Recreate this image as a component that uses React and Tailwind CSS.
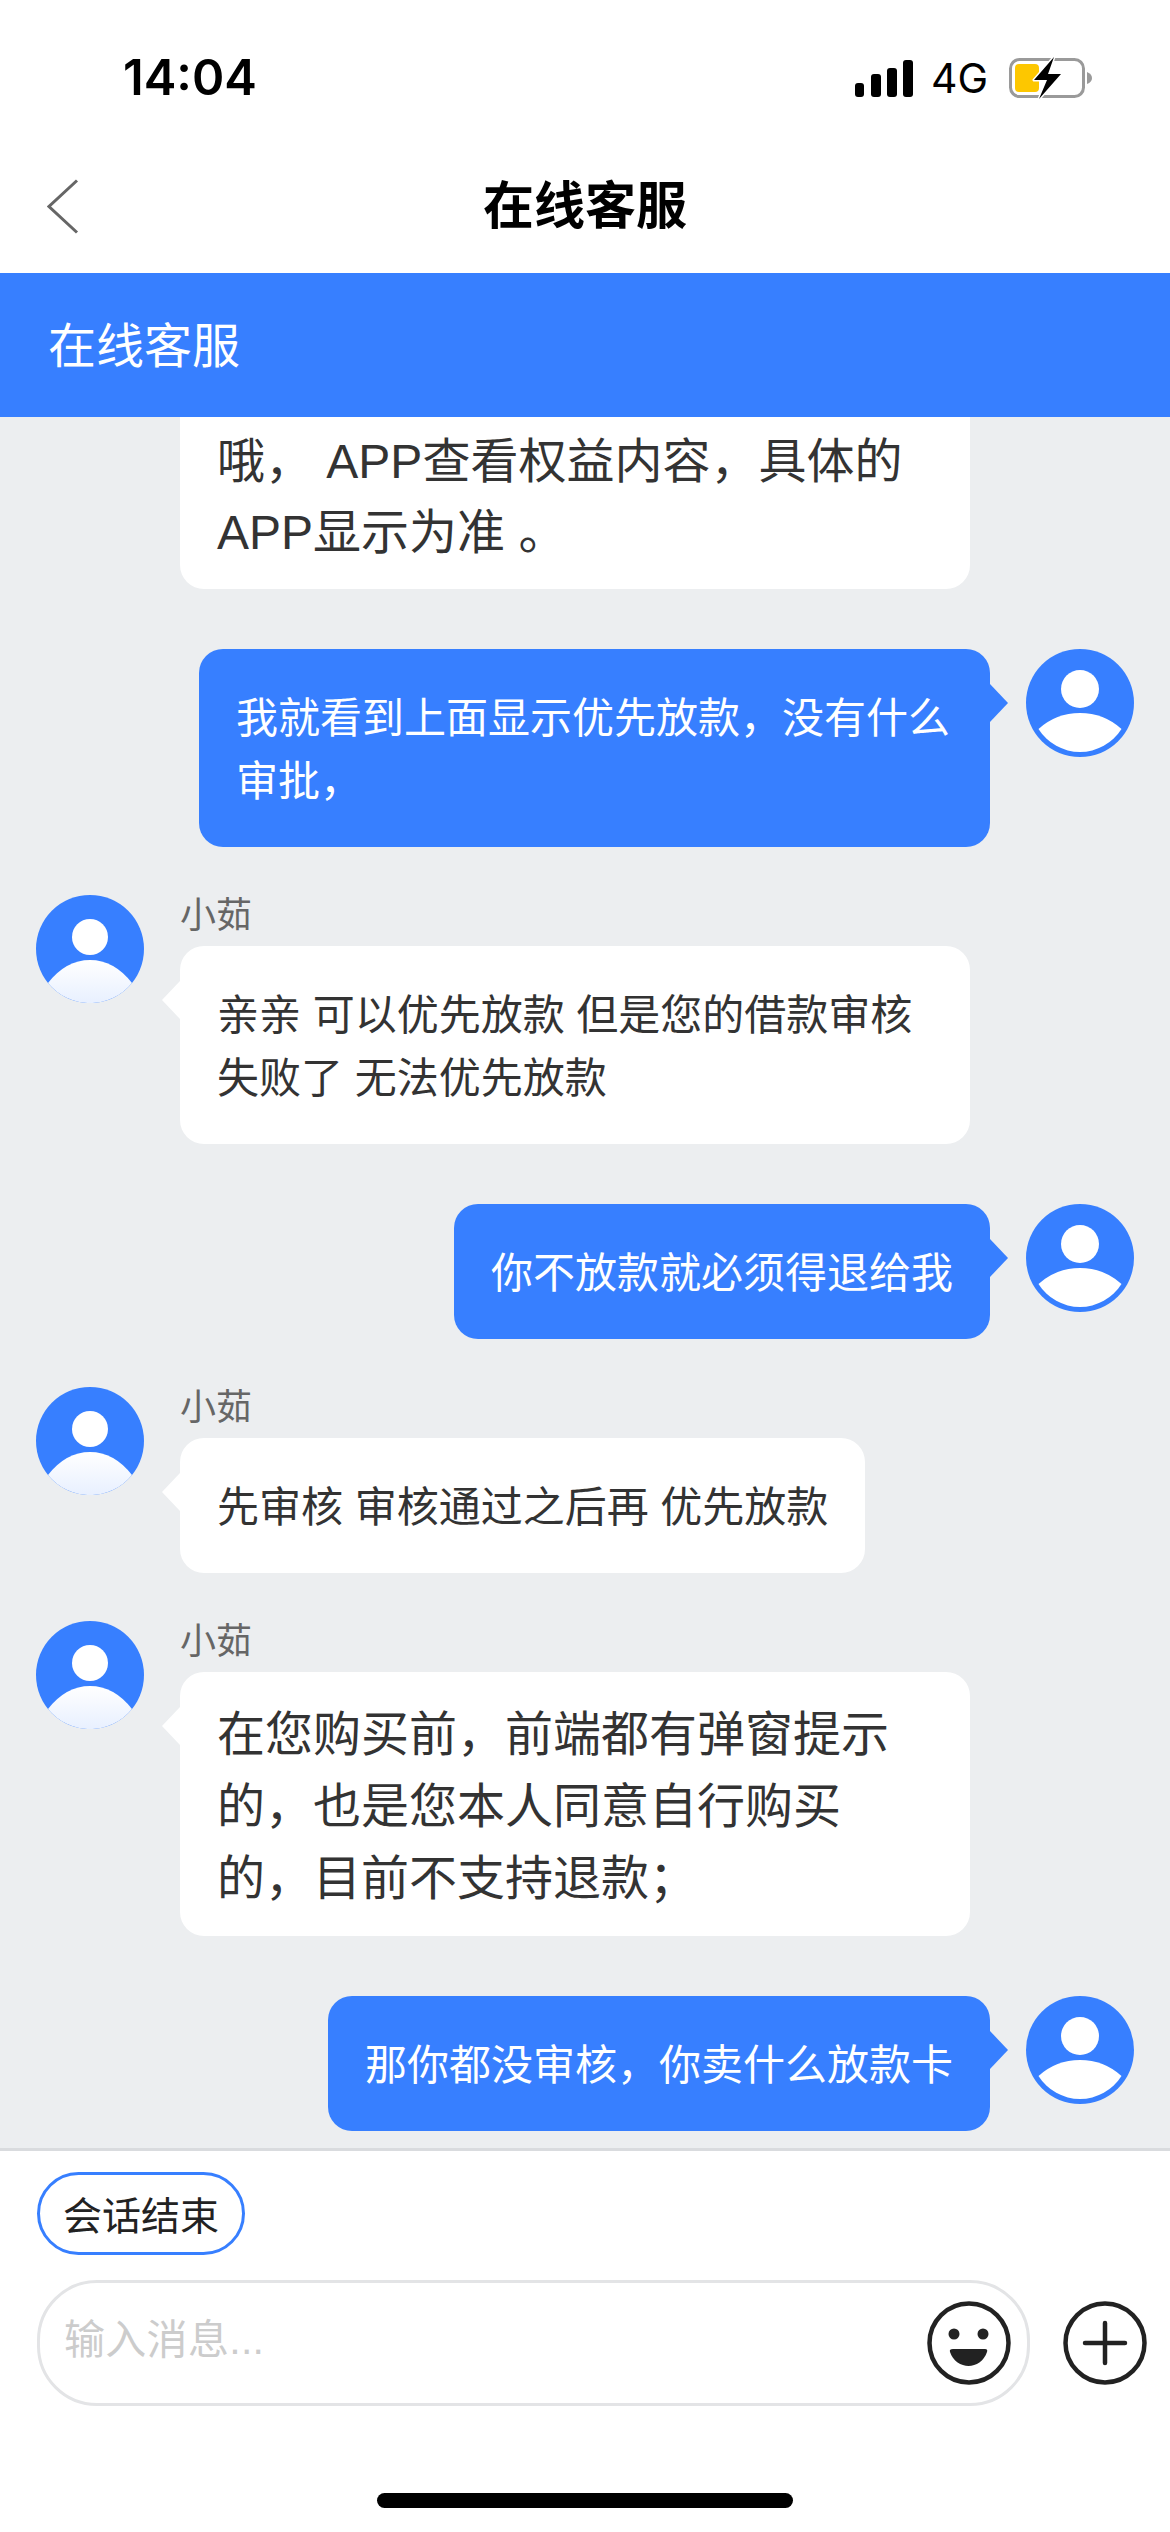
// App.jsx — online customer service chat screen

const FONT = "font-['Liberation_Sans','Noto_Sans_CJK_SC',sans-serif]";

// Avatar for the signed-in user: white bust inside a blue ring
function UserAvatar() {
  return (
    <svg width="108" height="108" viewBox="0 0 108 108" className="shrink-0">
      <circle cx="54" cy="54" r="54" fill="#377fff" />
      <circle cx="54" cy="40" r="19" fill="#fff" />
      <path d="M12.5 80 Q30 64 54 64 Q78 64 95.5 80 A49 49 0 0 1 12.5 80 Z" fill="#fff" />
    </svg>
  );
}

// Avatar for the agent: bust runs to the edge and fades to pale blue
function AgentAvatar() {
  return (
    <svg width="108" height="108" viewBox="0 0 108 108" className="shrink-0">
      <defs>
        <linearGradient id="agentBody" x1="0" y1="0" x2="0" y2="1">
          <stop offset="0" stopColor="#ffffff" />
          <stop offset="1" stopColor="#e8f0ff" />
        </linearGradient>
      </defs>
      <circle cx="54" cy="54" r="54" fill="#377fff" />
      <circle cx="54" cy="42" r="18" fill="#fff" />
      <path d="M12 88 Q30 65 54 65 Q78 65 96 88 A54 54 0 0 1 12 88 Z" fill="url(#agentBody)" />
    </svg>
  );
}

function AgentMessage({ children, textClass = "text-[42px] leading-[63px] pt-[38px] pb-[34px]" }) {
  return (
    <div className="flex shrink-0 gap-9 pl-9 mt-12">
      <AgentAvatar />
      <div className="flex flex-col items-start">
        <div className="h-[51px] text-[36px] leading-[42px] text-[#666]">小茹</div>
        <div className={`relative max-w-[790px] bg-white rounded-[24px] px-[37px] text-[#333] ${textClass}`}>
          <span className="absolute top-[35px] -left-[18px] border-y-[19px] border-r-[18px] border-y-transparent border-r-white" />
          {children}
        </div>
      </div>
    </div>
  );
}

function UserMessage({ children }) {
  return (
    <div className="flex shrink-0 justify-end gap-9 pr-9 mt-[60px]">
      <div className="relative max-w-[791px] bg-[#377fff] rounded-[24px] px-[37px] pt-[38px] pb-[34px] text-[42px] leading-[63px] text-white">
        <span className="absolute top-[35px] -right-[18px] border-y-[19px] border-l-[18px] border-y-transparent border-l-[#377fff]" />
        {children}
      </div>
      <UserAvatar />
    </div>
  );
}

function StatusBar() {
  return (
    <div className="h-[140px] pt-4 pl-[123px] pr-[77px] flex items-center justify-between">
      <span className="font-['Inter',sans-serif] text-[49px] font-semibold text-black">14:04</span>
      <div className="flex items-center">
        <svg width="58" height="37" viewBox="0 0 58 37">
          <rect x="0" y="23" width="9" height="14" rx="3" fill="#000" />
          <rect x="16" y="14" width="10" height="23" rx="3" fill="#000" />
          <rect x="32" y="8" width="10" height="29" rx="3" fill="#000" />
          <rect x="48" y="0" width="10" height="37" rx="3" fill="#000" />
        </svg>
        <span className="ml-[18px] font-['Inter',sans-serif] text-[41px] leading-none text-black">4G</span>
        <svg width="85" height="44" viewBox="0 0 85 44" className="ml-5">
          <rect x="2.5" y="3.5" width="73" height="37" rx="9" fill="none" stroke="#9a9a9a" strokeWidth="3" />
          <path d="M79 16 Q84 18 84 22 Q84 26 79 28 Z" fill="#9a9a9a" />
          <rect x="7" y="8" width="24" height="28" rx="4" fill="#fdc700" />
          <path
            d="M46 1 L26 24 L39 24 L31 43 L53 18 L40 18 Z"
            fill="#000"
            stroke="#fff"
            strokeWidth="3"
            paintOrder="stroke"
            strokeLinejoin="round"
          />
        </svg>
      </div>
    </div>
  );
}

function NavBar() {
  return (
    <div className="relative h-[133px] pt-0.5 flex items-center justify-center">
      <svg width="32" height="55" viewBox="0 0 32 55" className="absolute left-[47px] top-[39px]">
        <path d="M30 1.5 L2 27.5 L30 53.5" fill="none" stroke="#666" strokeWidth="3" />
      </svg>
      <span className="text-[51px] font-bold text-black">在线客服</span>
    </div>
  );
}

function Composer() {
  return (
    <div className="shrink-0 bg-white border-t-[3px] border-[#d9dbde] pt-[21px]">
      <div className="ml-[37px] w-[208px] h-[83px] pt-2 rounded-full border-[3px] border-[#377fff] flex items-center justify-center text-[39px] text-[#222]">
        会话结束
      </div>
      <div className="flex items-center mt-[25px] pl-[37px]">
        <div className="w-[993px] h-[126px] rounded-[60px] border-[3.5px] border-[#e3e4e6] pl-6 pr-4 flex items-center justify-between">
          <span className="pb-1 text-[41px] tracking-[0.3px] text-[#cccccc]">输入消息...</span>
          <svg width="84" height="84" viewBox="0 0 84 84">
            <circle cx="42" cy="42" r="39.5" fill="none" stroke="#222" strokeWidth="4.5" />
            <circle cx="27" cy="33" r="5.5" fill="#222" />
            <circle cx="56" cy="33" r="5.5" fill="#222" />
            <path d="M26 48 H58 Q61 48 60 51 C57 60 49 65 41.5 65 C34 65 26 60 23 51 Q22 48 26 48 Z" fill="#222" />
          </svg>
        </div>
        <svg width="84" height="84" viewBox="0 0 84 84" className="ml-[33px]">
          <circle cx="42" cy="42" r="39.5" fill="none" stroke="#222" strokeWidth="4.5" />
          <path d="M22 42 H62 M42 22 V62" fill="none" stroke="#222" strokeWidth="4.5" strokeLinecap="round" />
        </svg>
      </div>
      <div className="mt-[87px] mx-auto w-[416px] h-[15px] rounded-full bg-black" />
      <div className="h-6" />
    </div>
  );
}

export default function App() {
  return (
    <div className={`${FONT} w-[1170px] h-[2532px] flex flex-col bg-white overflow-hidden`}>
      <StatusBar />
      <NavBar />
      <div className="shrink-0 h-[144px] pt-1 bg-[#377fff] flex items-center pl-12 text-[48px] text-white">在线客服</div>

      {/* newest messages sit at the bottom, older ones get cut off under the header */}
      <div className="flex-1 min-h-0 overflow-hidden bg-[#eceef0] flex flex-col justify-end pb-[17px]">
        <div className="shrink-0 pl-[180px]">
          <div className="w-[790px] bg-white rounded-[24px] px-[37px] pt-[60px] pb-[21px] text-[48px] leading-[71px] text-[#333]">
            哦， APP查看权益内容，具体的 APP显示为准 。
          </div>
        </div>
        <UserMessage>我就看到上面显示优先放款，没有什么审批，</UserMessage>
        <AgentMessage>亲亲 可以优先放款 但是您的借款审核失败了 无法优先放款</AgentMessage>
        <UserMessage>你不放款就必须得退给我</UserMessage>
        <AgentMessage>先审核 审核通过之后再 优先放款</AgentMessage>
        <AgentMessage textClass="text-[48px] leading-[72px] pt-[27px] pb-[21px]">
          在您购买前，前端都有弹窗提示的，也是您本人同意自行购买的，目前不支持退款；
        </AgentMessage>
        <UserMessage>那你都没审核，你卖什么放款卡</UserMessage>
      </div>

      <Composer />
    </div>
  );
}
